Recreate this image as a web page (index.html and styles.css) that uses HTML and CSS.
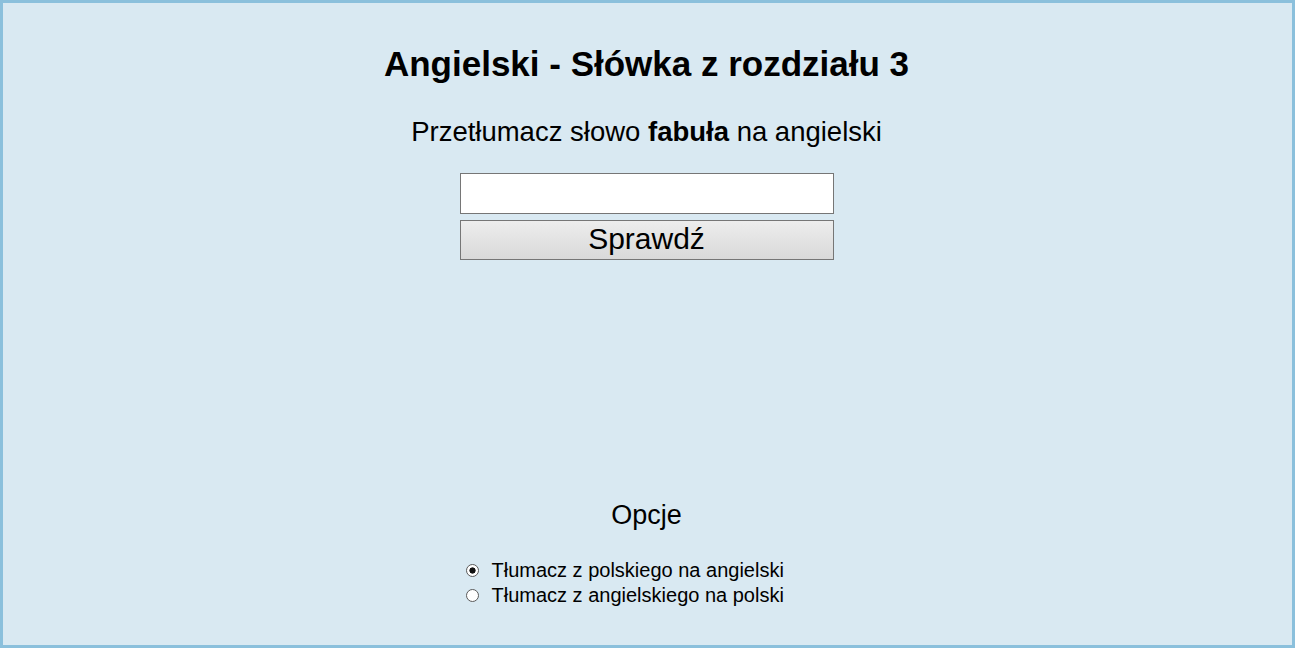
FILE: index.html
```html
<!DOCTYPE html>
<html lang="pl">
<head>
<meta charset="utf-8">
<title>Angielski - Słówka z rozdziału 3</title>
<link rel="stylesheet" href="styles.css">
</head>
<body>
<div class="frame">
  <h1 class="title">Angielski - Słówka z rozdziału 3</h1>
  <p class="question">Przetłumacz słowo <b>fabuła</b> na angielski</p>
  <form class="quiz">
    <input class="answer" type="text">
    <button class="check" type="button">Sprawdź</button>
  </form>
  <div class="options">
    <h2 class="options-title">Opcje</h2>
    <div class="choices">
      <label class="choice"><input class="radio" type="radio" name="dir" checked>Tłumacz z polskiego na angielski</label>
      <label class="choice"><input class="radio" type="radio" name="dir">Tłumacz z angielskiego na polski</label>
    </div>
  </div>
</div>
</body>
</html>
```
FILE: styles.css
```css
html, body {
  margin: 0;
  padding: 0;
}
body {
  font-family: "Liberation Sans", Arial, sans-serif;
  color: #000;
  background: #d9e9f2;
}
.frame {
  box-sizing: border-box;
  width: 1295px;
  height: 648px;
  border: 3px solid #8bc0dc;
  padding-right: 2px;
  background: #d9e9f2;
  display: flex;
  flex-direction: column;
  align-items: center;
}
.title {
  margin: 41px 0 0;
  font-size: 35px;
  font-weight: bold;
  line-height: 40px;
}
.question {
  margin: 32px 0 0;
  font-size: 27.5px;
  line-height: 31px;
}
.quiz {
  margin-top: 26px;
  width: 374px;
  display: flex;
  flex-direction: column;
  gap: 6px;
}
.answer {
  box-sizing: border-box;
  width: 374px;
  height: 41px;
  margin: 0;
  border: 1px solid #767676;
  background: #fff;
  font-size: 24px;
  padding: 0 6px;
}
.check {
  box-sizing: border-box;
  width: 374px;
  height: 40px;
  margin: 0;
  border: 1px solid #767676;
  background: linear-gradient(#ededed, #d9d9d9);
  font-family: "Liberation Sans", Arial, sans-serif;
  font-size: 30px;
  line-height: 36px;
  color: #000;
  padding: 0 0 2px;
}
.options {
  margin-top: 240px;
  width: 374px;
  display: flex;
  flex-direction: column;
  align-items: center;
}
.options-title {
  margin: 0;
  font-size: 27px;
  font-weight: normal;
  line-height: 31px;
}
.choices {
  align-self: stretch;
  margin-top: 27px;
  display: flex;
  flex-direction: column;
}
.choice {
  font-size: 20px;
  line-height: 25px;
  display: flex;
  align-items: center;
  gap: 13px;
}
.radio {
  appearance: none;
  -webkit-appearance: none;
  box-sizing: border-box;
  margin: 0 0 0 6px;
  width: 13px;
  height: 13px;
  border: 1px solid #5a5a5a;
  border-radius: 50%;
  background: #fff;
}
.radio:checked {
  background: radial-gradient(circle, #111 0, #111 2.8px, #fff 3.4px);
}
```
